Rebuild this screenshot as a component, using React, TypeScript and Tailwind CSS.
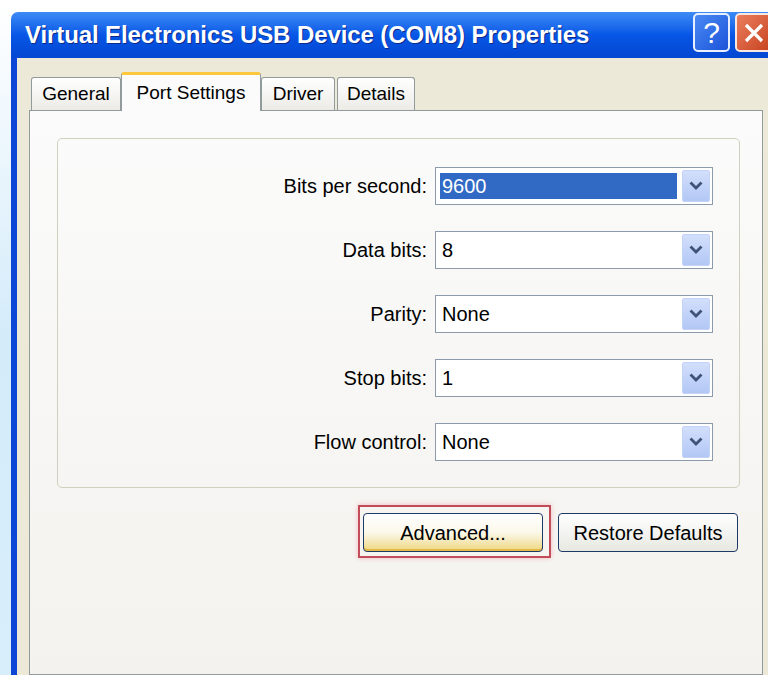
import { ReactNode } from "react";

const Chevron = () => (
  <svg width="14" height="10" viewBox="0 0 14 10">
    <path d="M2.5 2.5 L7 7 L11.5 2.5" fill="none" stroke="#3f5378" strokeWidth="2.8" strokeLinecap="square" />
  </svg>
);

const Combo = ({ value, selected }: { value: string; selected?: boolean }) => (
  <div className="w-[278px] h-[38px] border border-[#8b9bab] bg-white flex p-[2px]">
    <div
      className={
        selected
          ? "flex-1 my-[3px] ml-[2px] mr-[5px] px-[2px] flex items-center bg-[#316ac5] text-white"
          : "flex-1 my-[3px] ml-[2px] mr-[5px] px-[2px] flex items-center text-black"
      }
    >
      {value}
    </div>
    <div className="w-[28px] h-full rounded-[2px] border border-[#c3d3f7] bg-gradient-to-b from-[#d2dffc] to-[#b3c7f5] flex items-center justify-center">
      <Chevron />
    </div>
  </div>
);

const Row = ({ label, children }: { label: string; children: ReactNode }) => (
  <div className="flex items-center justify-end gap-[8px]">
    <span className="text-black">{label}</span>
    {children}
  </div>
);

const Tab = ({ label, width }: { label: string; width: string }) => (
  <div
    className={`${width} h-[33px] border border-b-0 border-[#919b9c] rounded-t-[3px] bg-gradient-to-b from-white to-[#ecebe6] flex items-center justify-center text-[19px] text-black`}
  >
    {label}
  </div>
);

export default function App() {
  return (
    <div className="w-[768px] h-[675px] overflow-hidden bg-gradient-to-b from-white via-[#d4ebfa] to-[#d8eefb] pt-[12px] pl-[11px] flex font-['Liberation_Sans',Arial,sans-serif]">
      <div className="w-[772px] shrink-0 flex flex-col rounded-tl-[7px] overflow-hidden">
        {/* title bar */}
        <div className="h-[46px] shrink-0 flex items-center pl-[14px] pr-[11px] bg-gradient-to-b from-[#3d8bf5] via-[#0756e6] to-[#0447d2]">
          <span className="text-white font-bold text-[24px] tracking-[-0.1px] [text-shadow:1px_1px_0_#0b2a8a]">
            Virtual Electronics USB Device (COM8) Properties
          </span>
          <div className="ml-auto flex gap-[5px] self-start mt-[1px]">
            <div className="w-[37px] h-[39px] rounded-[5px] border-2 border-[#e8f0ff] bg-gradient-to-br from-[#4a8af4] to-[#1d52d9] flex items-center justify-center text-white text-[30px] leading-none">
              ?
            </div>
            <div className="w-[37px] h-[39px] rounded-[5px] border-2 border-[#f8e8e0] bg-gradient-to-br from-[#ea7d5c] to-[#c8431f] flex items-center justify-center">
              <svg width="22" height="22" viewBox="0 0 22 22">
                <path d="M3 3 L19 19 M19 3 L3 19" stroke="white" strokeWidth="3.2" />
              </svg>
            </div>
          </div>
        </div>

        {/* window body */}
        <div className="flex-1 flex flex-col border-l-[6px] border-r-[6px] border-[#0d47d5] bg-[#ece9d8] pl-[12px] pr-[14px] pt-[14px]">
          <div className="h-[38px] flex items-end ml-[2px] relative z-10">
            <Tab label="General" width="w-[90px]" />
            <div className="w-[140px] h-[39px] -mb-[1px] border border-b-0 border-[#919b9c] border-t-[3px] border-t-[#ffc83c] rounded-t-[3px] bg-[#fbfbfb] flex items-center justify-center text-[19px] text-black">
              Port Settings
            </div>
            <Tab label="Driver" width="w-[74px]" />
            <div className="w-[2px]" />
            <Tab label="Details" width="w-[78px]" />
          </div>

          <div className="flex-1 border border-[#919b9c] bg-gradient-to-b from-[#fbfbfb] to-[#f3f2ee] pl-[27px] pt-[27px] pr-[22px] text-[20px]">
            <div className="h-[350px] border border-[#d0d0bf] rounded-[5px] flex flex-col gap-[26px] pt-[28px] pr-[26px]">
              <Row label="Bits per second:">
                <Combo value="9600" selected />
              </Row>
              <Row label="Data bits:">
                <Combo value="8" />
              </Row>
              <Row label="Parity:">
                <Combo value="None" />
              </Row>
              <Row label="Stop bits:">
                <Combo value="1" />
              </Row>
              <Row label="Flow control:">
                <Combo value="None" />
              </Row>
            </div>

            <div className="mt-[17px] mr-[2px] flex justify-end items-start gap-[7px]">
              <div className="border-2 border-[#c24d5a] pt-[6px] pb-[4px] pl-[3px] pr-[6px] shadow-[0_0_5px_#f3b9b9]">
                <button className="w-[180px] h-[39px] rounded-[4px] border border-[#1d3a66] bg-gradient-to-b from-white via-[#fbf8ea] to-[#efd67c] shadow-[inset_0_-2px_0_#e6b845] text-black">
                  Advanced...
                </button>
              </div>
              <button className="mt-[8px] w-[180px] h-[39px] rounded-[4px] border border-[#1d3a66] bg-gradient-to-b from-white to-[#e8e8e2] text-black">
                Restore Defaults
              </button>
            </div>
          </div>
        </div>
      </div>
    </div>
  );
}
